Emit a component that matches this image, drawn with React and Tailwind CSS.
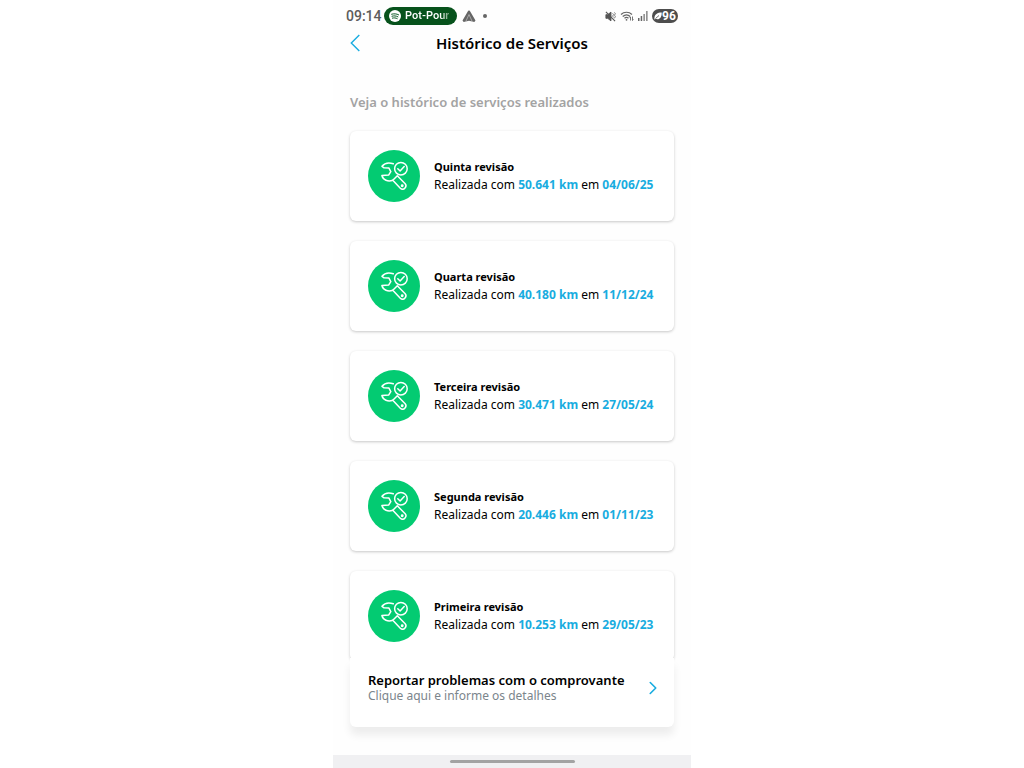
import { ChevronRight } from 'lucide-react';

const services = [
  { id: 5, title: 'Quinta revisão', km: '50.641 km', date: '04/06/25' },
  { id: 4, title: 'Quarta revisão', km: '40.180 km', date: '11/12/24' },
  { id: 3, title: 'Terceira revisão', km: '30.471 km', date: '27/05/24' },
  { id: 2, title: 'Segunda revisão', km: '20.446 km', date: '01/11/23' },
  { id: 1, title: 'Primeira revisão', km: '10.253 km', date: '29/05/23' },
];

const WrenchCheckIcon = () => (
  <svg
    viewBox="0 0 28 30"
    className="w-7 h-[30px]"
    fill="none"
    stroke="currentColor"
    strokeWidth="1.5"
    strokeLinecap="round"
    strokeLinejoin="round"
  >
    {/* wrench head */}
    <path d="M13.300 2.800C9 1.400 4.400 2.300 2 5.300L4 6.800L8.800 6.900L10.800 10.700L8.600 14.100L1.900 14.500C3 19 8 21 12.800 19.200" />
    {/* handle */}
    <path d="M17.300 14.800L25.200 22.800C26.300 24.100 26.200 25.700 25 27C23.600 28.700 21.800 28.800 20.300 27.300L12.800 19.200Z" />
    <circle cx="22.200" cy="24.700" r="0.700" />
    {/* check badge */}
    <circle cx="20.900" cy="7.700" r="6.300" />
    <path d="M17.800 7.700L20.100 10L24.200 5.500" />
  </svg>
);

const BackIcon = () => (
  <svg viewBox="0 0 10 18" className="w-2.5 h-[18px]" fill="none" stroke="currentColor" strokeWidth="1.4">
    <path d="M9.300 1L1.300 9L9.300 17" />
  </svg>
);

const SpotifyIcon = () => (
  <svg viewBox="0 0 12 12" className="size-3 shrink-0">
    <circle cx="6" cy="6" r="6" fill="#fff" />
    <path
      d="M2.600 4.200C5 3.500 7.500 3.700 9.600 4.800M3 6.200C5 5.600 7 5.800 8.900 6.800M3.400 8.100C5 7.700 6.700 7.800 8.200 8.600"
      stroke="#0b5a25"
      strokeWidth="1"
      strokeLinecap="round"
      fill="none"
    />
  </svg>
);

const AutoIcon = () => (
  <svg viewBox="0 0 14 13" className="w-3.5 h-[13px]" fill="#666">
    <path d="M6.200 0.800Q7 0 7.800 0.800L13.500 10.600L12.300 12L7 10.800L1.700 12L0.500 10.600Z" />
    <path d="M7 4.500L3.800 11.500M7 4.500L10.200 11.500" stroke="#d4d4d4" strokeWidth="0.600" fill="none" />
  </svg>
);

const MuteIcon = () => (
  <svg viewBox="0 0 12 12" className="size-[11px]" fill="none" stroke="#555" strokeWidth="1">
    <path d="M1 4H3L6.500 1.200V10.800L3 8H1Z" fill="#555" />
    <path d="M1 1L11 11" strokeWidth="1.200" />
    <path d="M8.300 2.500L9.300 4L8.300 5.500L9.300 7M10.300 1.500L11.300 3L10.300 4.500L11.300 6L10.300 8" strokeWidth="0.800" />
  </svg>
);

const WifiIcon = () => (
  <svg viewBox="0 0 14 12" className="w-3.5 h-3" fill="none" stroke="#666" strokeWidth="1.200">
    <path d="M1 4.500C4 1.500 9 1.500 12 4.500M2.700 6.500C5 4.400 8 4.400 10.300 6.500M4.500 8.300C5.800 7.100 7.200 7.100 8.500 8.300" />
    <circle cx="6.500" cy="9.800" r="0.900" fill="#666" stroke="none" />
    <path d="M10.500 10.500V7M9.700 8L10.500 7M12.500 6.500V10.500L13.500 9.500" strokeWidth="0.900" />
  </svg>
);

const SignalIcon = () => (
  <svg viewBox="0 0 10 10" className="size-2.5" fill="#666">
    <rect x="0" y="7" width="1.500" height="3" />
    <rect x="2.700" y="5" width="1.500" height="5" />
    <rect x="5.400" y="3" width="1.500" height="7" fill="#888" />
    <rect x="8.100" y="0" width="1.500" height="10" fill="#888" />
  </svg>
);

const LeafIcon = () => (
  <svg viewBox="0 0 8 8" className="size-2">
    <path d="M0.500 7.500C-0.300 3 3 0.500 7.700 0.500C8 5.500 5 8.300 1.800 6.800Z" fill="#fff" />
    <path d="M1.500 6.500L5 3.500" stroke="#4d4d4d" strokeWidth="0.800" />
  </svg>
);

const StatusBar = () => (
  <div className="flex items-center justify-between h-8 px-[13px] font-['Roboto',sans-serif]">
    <div className="flex items-center">
      <span className="w-[38px] text-[14px] leading-4 font-medium text-[#5c5c5c]">09:14</span>
      <div className="flex items-center gap-1 w-[73px] h-[18px] pl-[5px] rounded-full bg-[#07521c] text-white">
        <SpotifyIcon />
        <span className="whitespace-nowrap text-[11px] leading-4 font-semibold bg-linear-to-r from-white from-80% to-[#6b9876] bg-clip-text text-transparent">
          Pot-Pour
        </span>
      </div>
      <div className="flex items-center gap-[7px] ml-[5px]">
        <AutoIcon />
        <span className="size-1 rounded-full bg-[#666]" />
      </div>
    </div>
    <div className="flex items-center gap-1">
      <MuteIcon />
      <WifiIcon />
      <SignalIcon />
      <div className="flex items-center justify-center w-[26px] h-3.5 rounded-full bg-[#4d4d4d] text-white">
        <LeafIcon />
        <span className="text-[12px] leading-3.5 font-bold">96</span>
      </div>
    </div>
  </div>
);

const ServiceCard = ({ service }) => (
  <li className="flex items-center gap-3.5 h-[90px] px-[18px] pb-px rounded-md bg-white shadow-[0_1px_3px_rgba(0,0,0,0.22)]">
    <div className="flex items-center justify-center size-[52px] shrink-0 rounded-full bg-[#03cb72] text-white">
      <WrenchCheckIcon />
    </div>
    <div className="text-[12px] leading-[18px] whitespace-nowrap">
      <h2 className="text-[11px] font-bold">{service.title}</h2>
      <p>
        Realizada com <strong className="font-bold text-[#18ace0]">{service.km}</strong> em{' '}
        <strong className="font-bold text-[#18ace0]">{service.date}</strong>
      </p>
    </div>
  </li>
);

export default function App() {
  return (
    <div className="min-h-screen bg-white">
      <div className="flex flex-col min-h-screen w-full max-w-[358px] mx-auto bg-[#fefefe] text-black font-['Noto_Sans',sans-serif]">
        <StatusBar />

        <header className="grid grid-cols-[24px_1fr_24px] items-center h-[22px] px-[17px]">
          <button type="button" aria-label="Voltar" className="text-[#18ace0]">
            <BackIcon />
          </button>
          <h1 className="text-center text-[15px] leading-[22px] font-semibold">Histórico de Serviços</h1>
        </header>

        <main className="px-[17px] pt-[38px]">
          <p className="text-[13px] leading-5 font-semibold text-[#a3a3a3]">
            Veja o histórico de serviços realizados
          </p>

          <ul className="flex flex-col gap-5 mt-[19px]">
            {services.map((service) => (
              <ServiceCard key={service.id} service={service} />
            ))}
          </ul>

          {/* Report action, covers the lower edge of the last card */}
          <button
            type="button"
            className="relative flex items-center justify-between w-full h-[69px] -mt-[3px] pl-[18px] pr-2.5 pb-2.5 rounded-b-md bg-white text-left shadow-[0_8px_8px_rgba(0,0,0,0.07)]"
          >
            <span className="flex flex-col whitespace-nowrap">
              <span className="text-[13px] leading-4 font-semibold">Reportar problemas com o comprovante</span>
              <span className="text-[12px] leading-4 text-[#7b858c]">Clique aqui e informe os detalhes</span>
            </span>
            <ChevronRight size={22} strokeWidth={1.75} className="text-[#18ace0]" />
          </button>
        </main>

        <footer className="flex items-center justify-center h-[13px] mt-auto bg-[#f0f0f2]">
          <div className="w-[125px] h-[3px] rounded-full bg-[#a3a3a3]" />
        </footer>
      </div>
    </div>
  );
}
